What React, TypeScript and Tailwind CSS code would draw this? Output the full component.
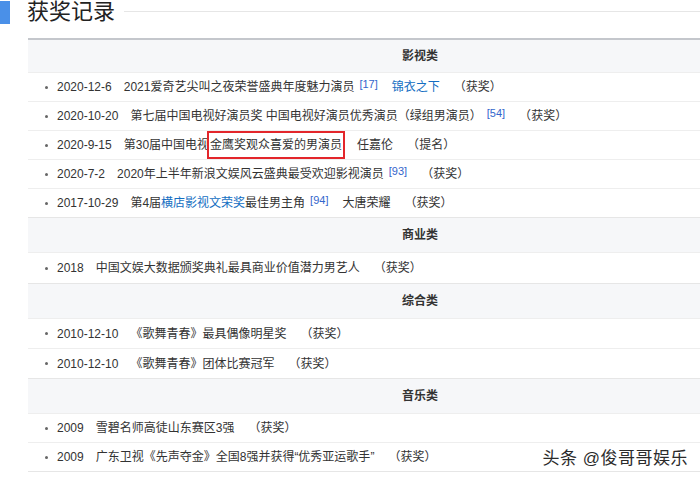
import type { ReactNode } from 'react';

interface Award {
  date: string;
  title: ReactNode;
  ref?: string;
  work?: string;
  workLink?: boolean;
  result: string;
}

const blue = 'text-[#136ec2]';

const sections: { name: string; rowH: string; rows: Award[] }[] = [
  {
    name: '影视类',
    rowH: 'h-[29px]',
    rows: [
      { date: '2020-12-6', title: '2021爱奇艺尖叫之夜荣誉盛典年度魅力演员', ref: '17', work: '锦衣之下', workLink: true, result: '获奖' },
      { date: '2020-10-20', title: '第七届中国电视好演员奖 中国电视好演员优秀演员（绿组男演员）', ref: '54', result: '获奖' },
      {
        date: '2020-9-15',
        title: (
          <>
            第30届中国电视
            <span className="outline-2 outline-[#e3262b] px-px py-[5px]">金鹰奖观众喜爱的男演员</span>
          </>
        ),
        work: '任嘉伦',
        result: '提名',
      },
      { date: '2020-7-2', title: '2020年上半年新浪文娱风云盛典最受欢迎影视演员', ref: '93', result: '获奖' },
      {
        date: '2017-10-29',
        title: (
          <>
            第4届<span className={blue}>横店影视文荣奖</span>最佳男主角
          </>
        ),
        ref: '94',
        work: '大唐荣耀',
        result: '获奖',
      },
    ],
  },
  {
    name: '商业类',
    rowH: 'h-[31px]',
    rows: [{ date: '2018', title: '中国文娱大数据颁奖典礼最具商业价值潜力男艺人', result: '获奖' }],
  },
  {
    name: '综合类',
    rowH: 'h-[30px]',
    rows: [
      { date: '2010-12-10', title: '《歌舞青春》最具偶像明星奖', result: '获奖' },
      { date: '2010-12-10', title: '《歌舞青春》团体比赛冠军', result: '获奖' },
    ],
  },
  {
    name: '音乐类',
    rowH: 'h-[29px]',
    rows: [
      { date: '2009', title: '雪碧名师高徒山东赛区3强', result: '获奖' },
      { date: '2009', title: '广东卫视《先声夺金》全国8强并获得“优秀亚运歌手”', result: '获奖' },
    ],
  },
];

function Row({ a, h }: { a: Award; h: string }) {
  return (
    <div className={`flex items-center ${h} border-t border-[#eeeeee] pl-[17px] whitespace-nowrap`}>
      <span className="w-[3px] h-[3px] rounded-full bg-[#666] mr-[9px]" />
      <span>{a.date}</span>
      <span className="ml-[12px]">{a.title}</span>
      {a.ref && (
        <sup className="ml-[5px] text-[11px] text-[#3366cc] relative -top-[3px]">[{a.ref}]</sup>
      )}
      {a.work && <span className={`ml-[14px] ${a.workLink ? blue : ''}`}>{a.work}</span>}
      <span className="ml-[14px]">（{a.result}）</span>
    </div>
  );
}

export default function App() {
  return (
    <div
      className="relative w-[700px] h-[480px] overflow-hidden bg-white text-[#333] text-[12px]"
      style={{ fontFamily: '"Liberation Sans", "Noto Sans CJK SC", sans-serif' }}
    >
      <div className="flex items-center h-[24px]">
        <div className="w-[10px] h-[23px] bg-[#4a90e8]" />
        <h2 className="ml-[17px] text-[22px] leading-[24px] text-[#222]">获奖记录</h2>
        <div className="flex-1 h-px bg-[#e6e6e6] ml-[9px] mt-[-2px]" />
      </div>

      <div className="mt-[14px] ml-[28px] w-[784px] border-t-2 border-[#c4c7cc]">
        {sections.map((s, i) => (
          <div key={s.name}>
            <div
              className={`flex items-center justify-center font-bold bg-[#f6f7f9] ${
                i === 0 ? 'h-[32px]' : 'h-[35px] border-t border-[#e6e6e6]'
              }`}
            >
              {s.name}
            </div>
            {s.rows.map((a, j) => (
              <Row key={j} a={a} h={s.rowH} />
            ))}
          </div>
        ))}
        <div className="border-t border-[#e6e6e6]" />
      </div>

      <div
        className="absolute right-[12px] bottom-[9px] text-[17px] text-[#2b2b2b] tracking-[0.5px]"
        style={{ textShadow: '0 0 2px #fff, 0 0 2px #fff' }}
      >
        头条 @俊哥哥娱乐
      </div>
    </div>
  );
}
